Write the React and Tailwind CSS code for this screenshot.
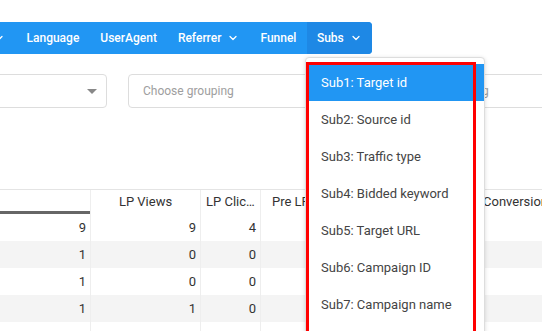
import { ChevronDown } from "lucide-react";

const navItems = [
  { label: "Language" },
  { label: "UserAgent" },
  { label: "Referrer", menu: true },
  { label: "Funnel" },
  { label: "Subs", menu: true, active: true },
];

const subs = [
  "Sub1: Target id",
  "Sub2: Source id",
  "Sub3: Traffic type",
  "Sub4: Bidded keyword",
  "Sub5: Target URL",
  "Sub6: Campaign ID",
  "Sub7: Campaign name",
  "Sub8: Placement",
];

const rows = [
  ["9", "9", "4"],
  ["1", "0", "0"],
  ["1", "0", "0"],
  ["1", "1", "0"],
  ["1", "0", "0"],
];

const App = () => {
  return (
    <div className="relative h-[331px] w-[542px] overflow-hidden bg-white font-['Roboto',sans-serif]">
      {/* top nav */}
      <div className="mt-[22px] flex h-8 w-[372px] items-center rounded-r bg-[#2196f3] text-[12px] font-medium text-white">
        <div className="-ml-[7px] flex h-full items-center pr-[11px]">
          <ChevronDown className="h-3 w-3" strokeWidth={2.5} />
        </div>
        {navItems.map((item) => (
          <div
            key={item.label}
            className={
              item.active
                ? "flex h-full flex-1 items-center rounded-r bg-[#1e88e5] pl-[10px]"
                : "flex h-full items-center px-[10.5px]"
            }
          >
            <span>{item.label}</span>
            {item.menu && <ChevronDown className="ml-[6px] h-3 w-3" strokeWidth={2.5} />}
          </div>
        ))}
      </div>

      {/* filters */}
      <div className="mt-5 flex h-[34px] gap-[21px] text-[12px]">
        <div className="-ml-[130px] flex w-[237px] shrink-0 items-center justify-end rounded border border-[#dddddd] pr-[9px]">
          <div className="h-0 w-0 border-x-[5px] border-t-[5px] border-x-transparent border-t-[#888888]" />
        </div>
        <div className="flex w-[234px] shrink-0 items-center rounded border border-[#dddddd] pl-[14px] text-[#9e9e9e]">
          Choose grouping
        </div>
        <div className="flex w-[234px] shrink-0 items-center rounded border border-[#dddddd] pl-[14px] text-[#9e9e9e]">
          Choose grouping
        </div>
      </div>

      {/* table */}
      <div className="mt-[81px] border-t border-[#e4e4e4] text-[13px] text-[#333333]">
        <div className="flex h-[24px]">
          <div className="w-[90px] shrink-0 border-b-[3px] border-[#666666]" />
          <div className="flex w-[110px] shrink-0 items-center justify-center border-l border-[#eeeeee]">LP Views</div>
          <div className="flex w-[60px] shrink-0 items-center justify-center border-l border-[#eeeeee] px-[5px]">
            <span className="truncate">LP Clicks</span>
          </div>
          <div className="flex w-[110px] shrink-0 items-center border-l border-[#eeeeee] pl-[11px]">Pre LP Views</div>
          <div className="w-[108px] shrink-0 border-l border-[#eeeeee]" />
          <div className="flex w-[110px] shrink-0 items-center border-l border-[#eeeeee] pl-[4px]">Conversions</div>
        </div>
        {rows.map((r, i) => (
          <div key={i} className={i % 2 === 1 ? "flex h-[27px] bg-[#f4f4f4]" : "flex h-[27px] bg-white"}>
            <div className="flex w-[90px] shrink-0 items-center justify-end pr-[4px]">{r[0]}</div>
            <div className="flex w-[110px] shrink-0 items-center justify-end border-l border-[#eeeeee] pr-[4px]">{r[1]}</div>
            <div className="flex w-[60px] shrink-0 items-center justify-end border-l border-[#eeeeee] pr-[4px]">{r[2]}</div>
            <div className="w-[110px] shrink-0 border-l border-[#eeeeee]" />
            <div className="w-[108px] shrink-0 border-l border-[#eeeeee]" />
            <div className="w-[110px] shrink-0 border-l border-[#eeeeee]" />
          </div>
        ))}
      </div>

      {/* subs dropdown */}
      <div className="absolute left-[305px] top-[57px] w-[180px] rounded-t border border-[#dddddd] bg-white pt-[6px] text-[13px] text-[#444444] shadow-[0_1px_4px_rgba(0,0,0,0.15)]">
        {subs.map((s, i) => (
          <div
            key={s}
            className={
              i === 0
                ? "flex h-[37px] items-center bg-[#2196f3] pl-[15px] text-white"
                : "flex h-[37px] items-center pl-[15px]"
            }
          >
            {s}
          </div>
        ))}
      </div>
      <div className="absolute left-[306px] top-[62px] h-[290px] w-[170px] border-[3px] border-[#ff0000]" />
    </div>
  );
};

export default App;
